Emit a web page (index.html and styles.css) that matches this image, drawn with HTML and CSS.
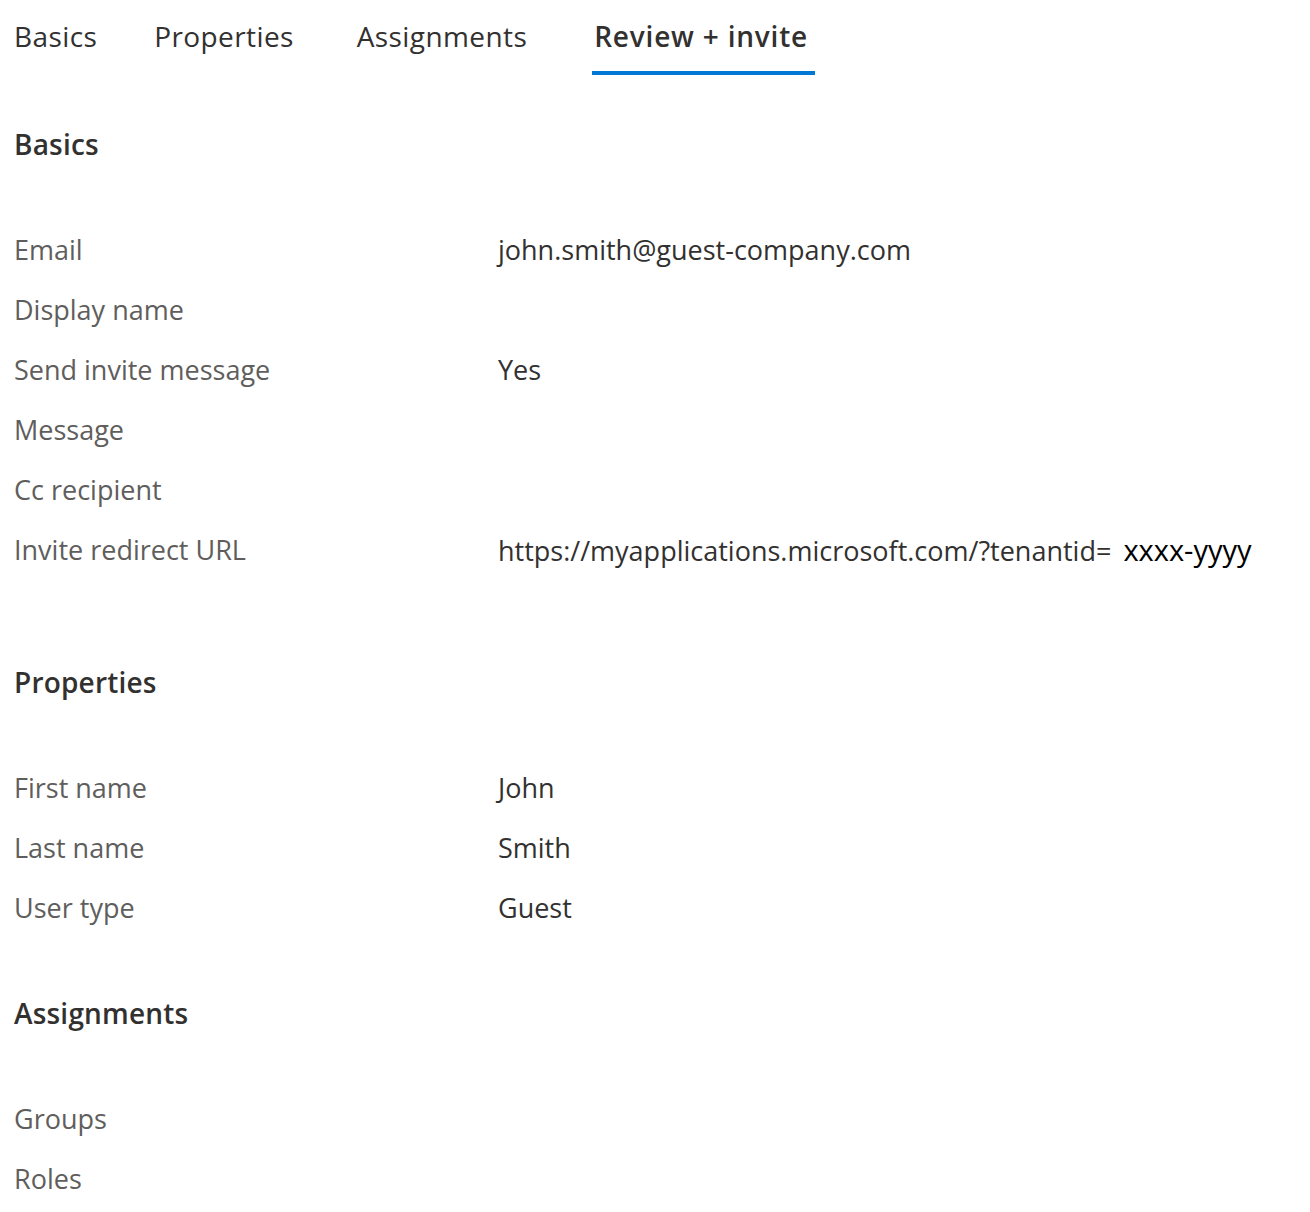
FILE: index.html
```html
<!DOCTYPE html>
<html lang="en">
<head>
<meta charset="utf-8">
<title>Review + invite</title>
<link rel="stylesheet" href="styles.css">
</head>
<body>
<nav class="tabs">
  <span class="tab">Basics</span>
  <span class="tab">Properties</span>
  <span class="tab">Assignments</span>
  <span class="tab active">Review + invite</span>
</nav>

<section class="section section-basics">
  <h2 class="heading">Basics</h2>
  <div class="grid">
    <div class="label">Email</div><div class="value">john.smith@guest-company.com</div>
    <div class="label">Display name</div><div class="value"></div>
    <div class="label">Send invite message</div><div class="value">Yes</div>
    <div class="label">Message</div><div class="value"></div>
    <div class="label">Cc recipient</div><div class="value"></div>
    <div class="label">Invite redirect URL</div><div class="value">https://myapplications.microsoft.com/?tenantid=<span class="pasted">xxxx-yyyy</span></div>
  </div>
</section>

<section class="section">
  <h2 class="heading">Properties</h2>
  <div class="grid">
    <div class="label">First name</div><div class="value">John</div>
    <div class="label">Last name</div><div class="value">Smith</div>
    <div class="label">User type</div><div class="value">Guest</div>
  </div>
</section>

<section class="section">
  <h2 class="heading">Assignments</h2>
  <div class="grid">
    <div class="label">Groups</div><div class="value"></div>
    <div class="label">Roles</div><div class="value"></div>
  </div>
</section>
</body>
</html>
```

FILE: styles.css
```css
html, body {
  margin: 0;
  padding: 0;
  background: #ffffff;
}

body {
  font-family: "Open Sans", "Noto Sans", sans-serif;
  font-size: 27px;
  color: #323130;
  padding-left: 14px;
}

.tabs {
  display: flex;
  height: 75px;
  font-size: 28px;
}

.tab {
  line-height: 40px;
  padding-top: 16px;
  padding-bottom: 15px;
  border-bottom: 4px solid transparent;
  color: #323130;
  white-space: nowrap;
  letter-spacing: 0.4px;
}

.tab:nth-child(2) { margin-left: 57px; }
.tab:nth-child(3) { margin-left: 63px; }

.tab.active {
  margin-left: 65px;
  font-weight: 600;
  letter-spacing: 0.8px;
  border-bottom-color: #0078d4;
  padding-left: 2px;
  padding-right: 7px;
}

.section {
  margin-top: 49px;
}

.section + .section {
  margin-top: 55px;
}

.section-basics + .section {
  margin-top: 82px;
}

.heading {
  margin: 0 0 56px 0;
  font-size: 28px;
  font-weight: 600;
  line-height: 40px;
  color: #323130;
  letter-spacing: 0.2px;
}

.grid {
  display: grid;
  grid-template-columns: 484px 1fr;
  grid-auto-rows: 60px;
  align-items: center;
}

.label {
  color: #605e5c;
  line-height: 40px;
}

.value {
  color: #323130;
  line-height: 40px;
  white-space: nowrap;
}

.pasted {
  color: #000000;
  font-size: 29px;
  margin-left: 12px;
}
```
